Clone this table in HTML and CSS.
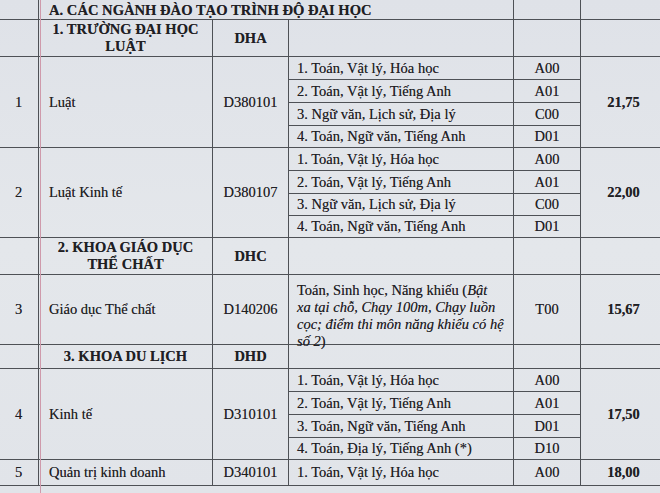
FILE: index.html
```html
<!DOCTYPE html>
<html lang="vi">
<head>
<meta charset="utf-8">
<title>Điểm chuẩn</title>
<link rel="stylesheet" href="styles.css">
</head>
<body>
<div class="page">
<table class="grid">
<colgroup>
<col class="c-no"><col class="c-name"><col class="c-code"><col class="c-subj"><col class="c-comb"><col class="c-score">
</colgroup>
<tbody>
<tr class="r-head"><td></td><td colspan="3" class="head">A. CÁC NGÀNH ĐÀO TẠO TRÌNH ĐỘ ĐẠI HỌC</td><td></td><td></td></tr>
<tr class="r-sec1"><td></td><td class="sec">1. TRƯỜNG ĐẠI HỌC<br>LUẬT</td><td class="sec">DHA</td><td></td><td></td><td></td></tr>

<tr class="r-sub"><td rowspan="4" class="no">1</td><td rowspan="4" class="name">Luật</td><td rowspan="4" class="code">D380101</td><td class="subj">1. Toán, Vật lý, Hóa học</td><td class="comb">A00</td><td rowspan="4" class="score">21,75</td></tr>
<tr class="r-sub"><td class="subj dash">2. Toán, Vật lý, Tiếng Anh</td><td class="comb dash">A01</td></tr>
<tr class="r-sub"><td class="subj dash">3. Ngữ văn, Lịch sử, Địa lý</td><td class="comb dash">C00</td></tr>
<tr class="r-sub-last"><td class="subj dash">4. Toán, Ngữ văn, Tiếng Anh</td><td class="comb dash">D01</td></tr>

<tr class="r-sub"><td rowspan="4" class="no">2</td><td rowspan="4" class="name">Luật Kinh tế</td><td rowspan="4" class="code">D380107</td><td class="subj">1. Toán, Vật lý, Hóa học</td><td class="comb">A00</td><td rowspan="4" class="score">22,00</td></tr>
<tr class="r-sub"><td class="subj dash">2. Toán, Vật lý, Tiếng Anh</td><td class="comb dash">A01</td></tr>
<tr class="r-sub-last"><td class="subj dash">3. Ngữ văn, Lịch sử, Địa lý</td><td class="comb dash">C00</td></tr>
<tr class="r-sub-last"><td class="subj">4. Toán, Ngữ văn, Tiếng Anh</td><td class="comb">D01</td></tr>

<tr class="r-sec2"><td></td><td class="sec">2. KHOA GIÁO DỤC<br>THỂ CHẤT</td><td class="sec">DHC</td><td></td><td></td><td></td></tr>

<tr class="r-long"><td class="no">3</td><td class="name">Giáo dục Thể chất</td><td class="code">D140206</td><td class="subj long"><div class="long-text">Toán, Sinh học, Năng khiếu (<em>Bật<br>xa tại chỗ, Chạy 100m, Chạy luồn<br>cọc; điểm thi môn năng khiếu có hệ<br>số 2</em>)</div></td><td class="comb">T00</td><td class="score">15,67</td></tr>

<tr class="r-sec3"><td></td><td class="sec">3. KHOA DU LỊCH</td><td class="sec">DHD</td><td></td><td></td><td></td></tr>

<tr class="r-sub"><td rowspan="4" class="no">4</td><td rowspan="4" class="name">Kinh tế</td><td rowspan="4" class="code">D310101</td><td class="subj">1. Toán, Vật lý, Hóa học</td><td class="comb">A00</td><td rowspan="4" class="score">17,50</td></tr>
<tr class="r-sub"><td class="subj dash">2. Toán, Vật lý, Tiếng Anh</td><td class="comb dash">A01</td></tr>
<tr class="r-sub"><td class="subj dash">3. Toán, Ngữ văn, Tiếng Anh</td><td class="comb dash">D01</td></tr>
<tr class="r-sub-last"><td class="subj dash">4. Toán, Địa lý, Tiếng Anh (*)</td><td class="comb dash">D10</td></tr>

<tr class="r-last"><td class="no">5</td><td class="name">Quản trị kinh doanh</td><td class="code">D340101</td><td class="subj">1. Toán, Vật lý, Hóa học</td><td class="comb">A00</td><td class="score">18,00</td></tr>
</tbody>
</table>
</div>
</body>
</html>
```
FILE: styles.css
```css
html, body {
  margin: 0;
  padding: 0;
  background: #e2e5ea;
}
body {
  width: 660px;
  height: 493px;
  overflow: hidden;
  font-family: "Liberation Serif", "Times New Roman", serif;
  color: #1f2024;
}
.page {
  position: relative;
  width: 660px;
  height: 493px;
  overflow: hidden;
  background: linear-gradient(180deg, #dfe2e8 0%, #e4e7eb 50%, #e1e4e9 100%);
}
.page::after {
  content: "";
  position: absolute;
  left: 40px;
  top: 0;
  bottom: 0;
  width: 1px;
  background: #cf9aab;
}
.grid {
  border-collapse: collapse;
  table-layout: fixed;
  width: 668px;
  margin-left: -2px;
  margin-top: -1px;
  font-size: 14.5px;
  text-shadow: 0 0 0.6px rgba(20, 20, 25, 0.55);
}
.c-no { width: 40px; }
.c-name { width: 174px; }
.c-code { width: 76px; }
.c-subj { width: 225px; }
.c-comb { width: 67px; }
.c-score { width: 86px; }

.grid td {
  border: 1px solid #4e5156;
  padding: 0;
  line-height: 17px;
  vertical-align: middle;
}
.grid td.dash {
  border-top: 1px dashed #878a90;
}
.r-head { height: 20px; }
.r-sec1 { height: 37px; }
.r-sub { height: 23px; }
.r-sub-last { height: 22px; }
.r-sec2 { height: 37px; }
.r-long { height: 70px; }
.r-sec3 { height: 24px; }
.r-last { height: 26px; }

.head {
  font-weight: bold;
  font-size: 14.6px;
  padding-left: 10px !important;
  padding-top: 2px !important;
}
.sec {
  font-weight: bold;
  text-align: center;
}
.no {
  text-align: center;
}
.name {
  padding-left: 10px !important;
}
.code {
  text-align: center;
}
.subj {
  padding-left: 8px !important;
  white-space: nowrap;
}
.grid td.long {
  vertical-align: top;
  padding-top: 7px;
}
.long-text {
  line-height: 17px;
  margin-bottom: -7px;
}
.comb {
  text-align: center;
}
.score {
  text-align: center;
  font-weight: bold;
}
```
